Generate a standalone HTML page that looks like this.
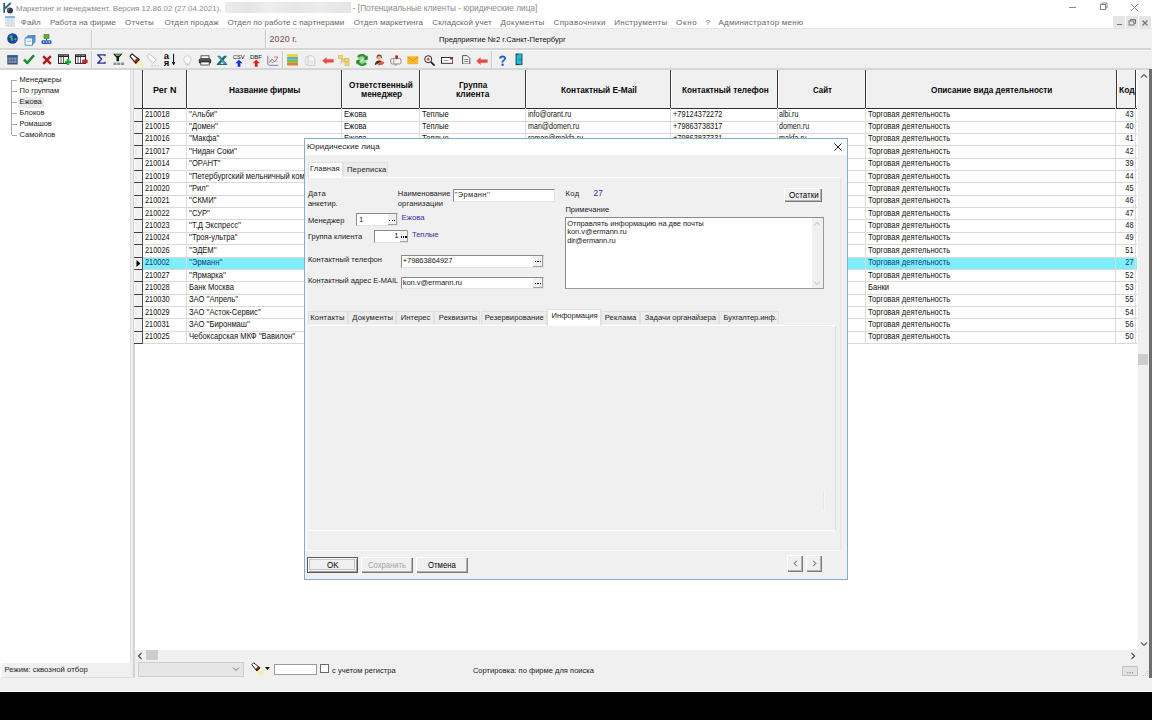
<!DOCTYPE html><html><head><meta charset="utf-8"><style>
*{margin:0;padding:0;box-sizing:border-box}
html,body{width:1152px;height:720px;overflow:hidden;background:#f0f0f0;font-family:"Liberation Sans",sans-serif}
div{position:absolute}
.t{white-space:nowrap;line-height:12px;height:12px}
svg{position:absolute}
</style></head><body>
<div style="left:0px;top:0px;width:1152px;height:28px;background:#fff"></div>
<svg style="left:2px;top:2px" width="12" height="12" viewBox="0 0 12 12"><path d="M2.2 1v9.8" stroke="#1e6272" stroke-width="1.8"></path><path d="M2.8 6.5L8.8 1" stroke="#1e6a7a" stroke-width="1.7"></path><circle cx="8" cy="8.6" r="3" fill="#22405e"></circle><circle cx="6.3" cy="7.6" r="1.4" fill="#c83a4a"></circle></svg>
<div class="t" style="left:16px;top:3.00px;font-size:7.9px;color:#8a8a8a;">Маркетинг и менеджмент. Версия 12.86.02 (27.04.2021).</div>
<div style="left:225px;top:2px;width:126px;height:10.5px;background:linear-gradient(90deg,#ececec,#e4e4e4 20%,#eeeeee 35%,#e6e6e6 55%,#ececec 75%,#e4e4e4)"></div>
<div class="t" style="left:352.8px;top:3.00px;font-size:8.28px;color:#8a8a8a;">- [Потенциальные клиенты - юридические лица]</div>
<div style="left:1069px;top:7px;width:7px;height:1px;background:#8a8a8a"></div>
<svg style="left:1099px;top:2px" width="9" height="9" viewBox="0 0 9 9"><rect x="1.5" y="2.5" width="5" height="5" fill="none" stroke="#888" stroke-width="1"></rect><path d="M3 2.5V1h5v5H6.5" fill="none" stroke="#888"></path></svg>
<svg style="left:1130px;top:2.5px" width="9" height="9" viewBox="0 0 9 9"><path d="M1 1L8 8M8 1L1 8" stroke="#888" stroke-width="1"></path></svg>
<svg style="left:5px;top:16px" width="10" height="11" viewBox="0 0 10 11"><rect x="0" y="0" width="10" height="11" fill="#e6e9ee"></rect><rect x="0" y="0" width="10" height="2.2" fill="#8fb6dc"></rect><path d="M0 4.5h10M0 7h10M0 9.5h10M3.3 2v9M6.6 2v9" stroke="#cfd3da" stroke-width=".6"></path></svg>
<div class="t" style="left: 20.75px; top: 16.9px; font-size: 8px; color: rgb(102, 102, 102); letter-spacing: 0.0927083px;">Файл</div>
<div class="t" style="left: 50px; top: 16.9px; font-size: 8px; color: rgb(102, 102, 102); letter-spacing: 0.0377232px;">Работа на фирме</div>
<div class="t" style="left: 125px; top: 16.9px; font-size: 8px; color: rgb(102, 102, 102); letter-spacing: 0.20875px;">Отчеты</div>
<div class="t" style="left: 164.5px; top: 16.9px; font-size: 8px; color: rgb(102, 102, 102); letter-spacing: 0.119034px;">Отдел продаж</div>
<div class="t" style="left: 227.5px; top: 16.9px; font-size: 8px; color: rgb(102, 102, 102); letter-spacing: 0.0612269px;">Отдел по работе с партнерами</div>
<div class="t" style="left: 353.75px; top: 16.9px; font-size: 8px; color: rgb(102, 102, 102); letter-spacing: 0.127917px;">Отдел маркетинга</div>
<div class="t" style="left: 432.25px; top: 16.9px; font-size: 8px; color: rgb(102, 102, 102); letter-spacing: 0.11875px;">Складской учет</div>
<div class="t" style="left: 500.5px; top: 16.9px; font-size: 8px; color: rgb(102, 102, 102); letter-spacing: 0.30625px;">Документы</div>
<div class="t" style="left: 553.5px; top: 16.9px; font-size: 8px; color: rgb(102, 102, 102); letter-spacing: 0.348125px;">Справочники</div>
<div class="t" style="left: 614.25px; top: 16.9px; font-size: 8px; color: rgb(102, 102, 102); letter-spacing: 0.305938px;">Инструменты</div>
<div class="t" style="left: 676px; top: 16.9px; font-size: 8px; color: rgb(102, 102, 102); letter-spacing: 0.702083px;">Окно</div>
<div class="t" style="left: 705.5px; top: 16.9px; font-size: 8px; color: rgb(102, 102, 102); letter-spacing: -0.253125px;">?</div>
<div class="t" style="left: 718.5px; top: 16.9px; font-size: 8px; color: rgb(102, 102, 102); letter-spacing: 0.243382px;">Администратор меню</div>
<div style="left:1113px;top:16.4px;width:11.8px;height:12px;background:#e6e6e6"></div>
<div style="left:1126.2px;top:16.4px;width:11.8px;height:12px;background:#e6e6e6"></div>
<div style="left:1139px;top:16.4px;width:11.8px;height:12px;background:#e6e6e6"></div>
<div style="left:1116.5px;top:24px;width:5px;height:1.3px;background:#777"></div>
<svg style="left:1128px;top:18px" width="9" height="9" viewBox="0 0 9 9"><rect x="1" y="3" width="5" height="4" fill="none" stroke="#777" stroke-width="1"></rect><path d="M2.5 3V1.5h5v4H6" fill="none" stroke="#777"></path></svg>
<svg style="left:1141px;top:18.5px" width="8" height="8" viewBox="0 0 8 8"><path d="M1.5 1.5L6.5 6.5M6.5 1.5L1.5 6.5" stroke="#777" stroke-width="1.3"></path></svg>
<div style="left:0px;top:27.8px;width:1152px;height:1.2px;background:#e8e8e8"></div>
<div style="left:0px;top:48.2px;width:1151px;height:1.6px;background:#d6d6d6"></div>
<div style="left:0px;top:49.8px;width:1151px;height:0.8px;background:#fafafa"></div>
<div style="left:0px;top:68.4px;width:1151px;height:1.2px;background:#d6d6d6"></div>
<div style="left:91.3px;top:29.5px;width:1px;height:18.5px;background:#c8c8c8"></div>
<div style="left:92.3px;top:29.5px;width:1px;height:18.5px;background:#fbfbfb"></div>
<div style="left:91.3px;top:50.5px;width:1px;height:17.900000000000006px;background:#c8c8c8"></div>
<div style="left:92.3px;top:50.5px;width:1px;height:17.900000000000006px;background:#fbfbfb"></div>
<div style="left:265.2px;top:29.8px;width:1px;height:18.599999999999998px;background:#c8c8c8"></div>
<div style="left:266.2px;top:29.8px;width:1px;height:18.599999999999998px;background:#fbfbfb"></div>
<div style="left:282.3px;top:50.5px;width:1px;height:17.900000000000006px;background:#c8c8c8"></div>
<div style="left:283.3px;top:50.5px;width:1px;height:17.900000000000006px;background:#fbfbfb"></div>
<div style="left:491.4px;top:50.5px;width:1px;height:17.900000000000006px;background:#c8c8c8"></div>
<div style="left:492.4px;top:50.5px;width:1px;height:17.900000000000006px;background:#fbfbfb"></div>
<div class="t" style="left: 269.6px; top: 33px; font-size: 8.8px; color: rgb(125, 72, 72); letter-spacing: 0.134375px;">2020 г.</div>
<div class="t" style="left: 439px; top: 34.2px; font-size: 7.6px; color: rgb(17, 17, 17); letter-spacing: -0.00665323px;">Предприятие №2 г.Санкт-Петербург</div>
<svg style="left:6.5px;top:33px" width="11" height="11" viewBox="0 0 11 11"><circle cx="5.5" cy="5.5" r="5.3" fill="#1b3fae"></circle><path d="M3 2.5c1.5-.5 2.5 0 3 1l-1 1.5 1.5 1-1 2.5-1.5-1.5-.5-2-1.5-.5z" fill="#3fb84a"></path><path d="M7 5.5l1.8-.5.8 1.5-1.2 1.2z" fill="#3fb84a"></path></svg>
<svg style="left:23.5px;top:33.5px" width="12" height="12" viewBox="0 0 12 12"><path d="M1 4L4 1h7.5v7L8.5 11.3H1z" fill="#5a95cf"></path><path d="M1 4h7.5v7.3H1z" fill="#eef4fb" stroke="#4f86c0" stroke-width=".8"></path><path d="M2.5 7.3h4.5" stroke="#8fb0d0" stroke-width=".8"></path><path d="M8.5 4L11.5 1" stroke="#2f6aa8" stroke-width=".7"></path></svg>
<svg style="left:41.3px;top:33.5px" width="11" height="11" viewBox="0 0 11 11"><rect x="3" y="0.5" width="5" height="4" fill="#6aa830" stroke="#3a7a20" stroke-width=".6"></rect><path d="M5.5 4.5v2" stroke="#3060a0"></path><rect x="0.5" y="6.2" width="10" height="3.8" rx="1.2" fill="#2f66b8"></rect><circle cx="2.8" cy="8.1" r=".8" fill="#bcd6f0"></circle><circle cx="5.5" cy="8.1" r=".8" fill="#bcd6f0"></circle><circle cx="8.2" cy="8.1" r=".8" fill="#bcd6f0"></circle></svg>
<svg style="left:6.8px;top:54.5px" width="11" height="10" viewBox="0 0 11 10"><rect x="0.3" y="0.3" width="10.4" height="9.2" fill="#3c5672"></rect><rect x="1.5" y="2.5" width="8" height="5.5" fill="#7f9ab5"></rect><path d="M1.5 5.2h8M4.2 2.5v5.5M6.8 2.5v5.5" stroke="#3c5672" stroke-width=".6"></path><rect x="0.3" y="0.3" width="10.4" height="1.6" fill="#2a5ea8"></rect></svg>
<svg style="left:23px;top:54.3px" width="12" height="10.5" viewBox="0 0 12 10.5"><path d="M1 5.5l3.2 3.5L11 1.2" fill="none" stroke="#178a2a" stroke-width="2.5" stroke-linejoin="round"></path></svg>
<svg style="left:42px;top:55px" width="10" height="10" viewBox="0 0 10 10"><path d="M1.2 1.2L8.8 8.8M8.8 1.2L1.2 8.8" stroke="#b41a1a" stroke-width="2.4"></path></svg>
<svg style="left:57.7px;top:54px" width="14" height="11" viewBox="0 0 14 11"><rect x="0.5" y="0.8" width="10" height="8.6" fill="#fff" stroke="#222" stroke-width="1"></rect><path d="M0.5 2.3h10" stroke="#222" stroke-width="1.4"></path><path d="M3 1v8.5M5.5 1v8.5" stroke="#333" stroke-width=".8"></path><path d="M10 5v6M7 8h6" stroke="#18b030" stroke-width="2.4"></path></svg>
<svg style="left:75px;top:54px" width="13" height="11" viewBox="0 0 13 11"><rect x="0.5" y="0.8" width="10" height="8.6" fill="#fff" stroke="#222" stroke-width="1"></rect><path d="M0.5 2.3h10" stroke="#222" stroke-width="1.4"></path><path d="M3 1v8.5M5.5 1v8.5" stroke="#333" stroke-width=".8"></path><rect x="7.2" y="5.5" width="5.5" height="3.8" rx="1" fill="#d02020"></rect></svg>
<svg style="left:97px;top:54.3px" width="9" height="10" viewBox="0 0 9 10"><path d="M8 2.2V.8H.8l3.8 4.2L.8 9.2H8V7.8" fill="none" stroke="#2a2a90" stroke-width="1.3"></path></svg>
<svg style="left:112px;top:53.2px" width="14" height="13" viewBox="0 0 14 13"><path d="M1 .8h9.5L7 4.8v3.5H4.5V4.8z" fill="#1a1a1a"></path><path d="M2.5 1.2h6.5L7 3H4.5z" fill="#5bbf50"></path><rect x="1.5" y="9.5" width="3" height="2.5" fill="#7a9a8a"></rect><rect x="5.3" y="9.5" width="3" height="2.5" fill="#7a9a8a"></rect><rect x="9.1" y="9.5" width="3" height="2.5" fill="#7a9a8a"></rect></svg>
<svg style="left:128.8px;top:52.8px" width="14" height="14" viewBox="0 0 14 14"><circle cx="10.2" cy="10.6" r="3.4" fill="#f5f0b0"></circle><path d="M3.06 .94L10.27 6.73 6.73 10.27 .94 3.06z" fill="#fff" stroke="#1a1a1a" stroke-width="1.1" stroke-linejoin="round"></path><path d="M8.4 5.2L10.27 6.73 6.73 10.27 5.2 8.4z" fill="#c42020" stroke="#1a1a1a" stroke-width=".8"></path></svg>
<svg style="left:145.8px;top:52.8px" width="14" height="14" viewBox="0 0 14 14"><path d="M3.06 .94L10.27 6.73 6.73 10.27 .94 3.06z" fill="#fcfcfc" stroke="#c4c4c4" stroke-width="1" stroke-linejoin="round"></path><path d="M5.5 12.8h1.2M8.5 12.8h1.2M11.5 12.8h1.2" stroke="#a8a8a8" stroke-width="1"></path></svg>
<svg style="left:164px;top:53px" width="12" height="14" viewBox="0 0 12 14"><text x="-0.3" y="6.3" font-family="Liberation Sans" font-weight="bold" font-size="9.5" fill="#0a0a0a">a</text><text x="-0.3" y="13.2" font-family="Liberation Sans" font-weight="bold" font-size="9.5" fill="#0a0a0a">я</text><path d="M9.6 .8v9.5" stroke="#0a0a0a" stroke-width="1"></path><path d="M7.8 9h3.6l-1.8 3.6z" fill="#0a0a0a"></path></svg>
<svg style="left:182.8px;top:54.5px" width="9" height="11" viewBox="0 0 9 11"><path d="M4.5 .8a3.6 3.6 0 0 1 2.2 6.5v1.5H2.3V7.3A3.6 3.6 0 0 1 4.5 .8z" fill="#fbfbfb" stroke="#c6c6c6" stroke-width=".9"></path><path d="M2.8 9.8h3.4" stroke="#c6c6c6"></path></svg>
<svg style="left:197.7px;top:54.5px" width="14" height="11" viewBox="0 0 14 11"><rect x="3" y=".8" width="8" height="3" fill="#fff" stroke="#333" stroke-width=".8"></rect><rect x=".8" y="3.5" width="12.4" height="5" rx="1.5" fill="#3a3a3a"></rect><rect x="2.8" y="7" width="8.4" height="3" fill="#fff" stroke="#333" stroke-width=".8"></rect><path d="M2 5h10" stroke="#888" stroke-width=".6"></path></svg>
<svg style="left:215.6px;top:55.2px" width="12" height="10" viewBox="0 0 12 10"><path d="M.8 .8h3.2l7.2 8.4H8z" fill="#2b7f8f"></path><path d="M11.2 .8H8L.8 9.2H4z" fill="#1f6a78"></path><path d="M2 1.5l6.8 7" stroke="#9fe0ec" stroke-width=".7"></path><path d="M.8 9.4h10.4" stroke="#175a66" stroke-width="1"></path></svg>
<svg style="left:232.6px;top:53.6px" width="12" height="13.5" viewBox="0 0 12 13.5"><text x="0" y="5" font-family="Liberation Sans" font-size="5.6" fill="#111" textLength="11.6" lengthAdjust="spacingAndGlyphs">CSV</text><path d="M6 5.8l3.6 3.4H7.4v3.6H4.6V9.2H2.4z" fill="#1530e0"></path></svg>
<svg style="left:249.5px;top:53.6px" width="13" height="13.5" viewBox="0 0 13 13.5"><text x="0" y="5" font-family="Liberation Sans" font-size="5.6" fill="#111" textLength="12" lengthAdjust="spacingAndGlyphs">DBF</text><path d="M6.2 5.8l3.6 3.4H7.6v3.6H4.8V9.2H2.6z" fill="#e81818"></path></svg>
<svg style="left:267px;top:55px" width="12" height="11" viewBox="0 0 12 11"><path d="M.8 .8v8.5a2 1.5 0 0 0 2 1h8.5" fill="none" stroke="#6a7a9a" stroke-width=".9"></path><path d="M2 8l3-4 2.5 3 3.5-5" fill="none" stroke="#d86060" stroke-width=".9"></path><path d="M2.5 4.5l3 3.5 3-3 2 2" fill="none" stroke="#60a0c0" stroke-width=".8"></path><path d="M7 2h4" stroke="#d86060" stroke-width=".8"></path></svg>
<svg style="left:287.2px;top:54.2px" width="11.2" height="11.6" viewBox="0 0 11.2 11.6"><rect x="0" y="0" width="11.2" height="2.9" rx=".8" fill="#f2d23a"></rect><rect x="0" y="2.9" width="11.2" height="2.9" rx=".8" fill="#4fb0dc"></rect><rect x="0" y="5.8" width="11.2" height="2.9" rx=".8" fill="#86c03c"></rect><rect x="0" y="8.7" width="11.2" height="2.9" rx=".8" fill="#ec7a34"></rect></svg>
<svg style="left:305px;top:55px" width="10.5" height="11" viewBox="0 0 10.5 11"><path d="M.8 1.8h5v8H.8z" fill="#fafafa" stroke="#c8c8c8" stroke-width=".8"></path><path d="M3 .8h4.3l2.5 2.5v7H3z" fill="#f6f6f6" stroke="#c0c0c0" stroke-width=".8"></path><path d="M4.5 6h3.5M4.5 7.8h3.5" stroke="#cfcfcf" stroke-width=".7"></path></svg>
<svg style="left:321.5px;top:56.5px" width="12" height="7.5" viewBox="0 0 12 7.5"><path d="M.3 3.7L4.6 .2v2h7v3.2h-7v2z" fill="#e94a3a"></path><path d="M4.6 2.2h7" stroke="#f59080" stroke-width=".6"></path></svg>
<svg style="left:338.3px;top:54.6px" width="12" height="11.5" viewBox="0 0 12 11.5"><rect x=".5" y=".5" width="4" height="3" fill="#f0da70" stroke="#c8a838" stroke-width=".5"></rect><rect x="3.5" y="4" width="4" height="3" fill="#f0da70" stroke="#c8a838" stroke-width=".5"></rect><rect x="7" y="3.5" width="4" height="3" fill="#f0da70" stroke="#c8a838" stroke-width=".5"></rect><rect x="7" y="7.8" width="4" height="3" fill="#f0da70" stroke="#c8a838" stroke-width=".5"></rect><rect x="2" y="6.5" width="2.5" height="2.5" fill="#ddd"></rect></svg>
<svg style="left:355.5px;top:54.4px" width="12" height="12" viewBox="0 0 12 12"><circle cx="6" cy="6" r="4.4" fill="#9ad890"></circle><path d="M10.2 4.2A4.6 4.6 0 0 0 2 3.2" fill="none" stroke="#2c9a30" stroke-width="2.4"></path><path d="M1.8 7.8A4.6 4.6 0 0 0 10 8.8" fill="none" stroke="#2c9a30" stroke-width="2.4"></path><path d="M11.6 1.6v4.2H7.6z" fill="#1f7a22"></path><path d="M.4 10.4V6.2h4z" fill="#1f7a22"></path><path d="M4.3 6.8l3-2.2.6 1.4-3 2z" fill="#d8f4d0"></path></svg>
<svg style="left:373.5px;top:54.2px" width="11" height="12" viewBox="0 0 11 12"><path d="M2.6 3.6c0-2 1-3.1 2.6-3.1s2.6 1 2.6 3l-.6 1.2H3.2z" fill="#7a3a18"></path><ellipse cx="5.2" cy="4" rx="1.9" ry="2.1" fill="#f0b890"></ellipse><path d="M.8 11.2c0-3 1.6-4.8 4.2-4.8 1.4 0 2.2.4 2.8 1z" fill="#4a3030"></path><path d="M3.5 11.2c.5-1.8 2-3.4 4.2-3.6 1.2-.1 2.2.3 2.8.9-.6 1.6-2.6 2.7-5 2.7z" fill="#e55840"></path></svg>
<svg style="left:389.8px;top:54.6px" width="12" height="11" viewBox="0 0 12 11"><rect x=".8" y="3.4" width="10.2" height="5.6" rx="1.6" fill="#f2f2f2" stroke="#8a8a8a" stroke-width="1"></rect><path d="M3.8 3.6v5.2" stroke="#8a8a8a" stroke-width=".8"></path><rect x="5.3" y=".4" width="2.6" height="3" fill="#b82020"></rect><path d="M6.6 3.2v1.2" stroke="#b82020"></path><path d="M5.8 9v2" stroke="#8a8a8a" stroke-width="1"></path></svg>
<svg style="left:407px;top:56px" width="11.5" height="8.5" viewBox="0 0 11.5 8.5"><rect x=".3" y=".3" width="11" height="8" rx=".8" fill="#f6b82a"></rect><path d="M.6 .8l5.1 4 5.1-4" fill="none" stroke="#d08a10" stroke-width=".9"></path></svg>
<svg style="left:424px;top:54.8px" width="11.5" height="11" viewBox="0 0 11.5 11"><circle cx="4.2" cy="4.2" r="3.5" fill="#fff" stroke="#222" stroke-width="1"></circle><path d="M2.6 4.2h3.2M4.2 2.6v3.2" stroke="#d02020" stroke-width="1"></path><path d="M6.8 6.8l3.8 3.8" stroke="#222" stroke-width="1.8"></path></svg>
<svg style="left:441px;top:57.2px" width="12.3" height="6.8" viewBox="0 0 12.3 6.8"><rect x=".5" y=".5" width="11.3" height="5.8" fill="#fff" stroke="#333" stroke-width="1"></rect><path d="M2.5 3.6h5" stroke="#777" stroke-width=".8"></path><rect x="9" y=".5" width="2.6" height="2" fill="#c02020"></rect></svg>
<svg style="left:462.3px;top:54.8px" width="8.5" height="9.5" viewBox="0 0 8.5 9.5"><path d="M.6 .6h4.5l2.7 2.7v5.8H.6z" fill="#f4f4f4" stroke="#444" stroke-width=".9"></path><path d="M2.3 4.5h3.8M2.3 6.5h3.8" stroke="#555" stroke-width=".7"></path></svg>
<svg style="left:475.6px;top:56.5px" width="12" height="8" viewBox="0 0 12 8"><path d="M.3 4L4.6 .3v2.2h7v3.2h-7v2.2z" fill="#ec4a3a"></path><path d="M4.6 2.5h7" stroke="#f59080" stroke-width=".6"></path></svg>
<svg style="left:497.5px;top:54.6px" width="9" height="11.2" viewBox="0 0 9 11.2"><path d="M1.2 3.4c0-1.8 1.4-2.8 3.4-2.8s3.4 1.2 3.4 2.7c0 2-2.6 2.3-2.6 4.3H3.5c0-2.6 2.5-2.8 2.5-4.2 0-.6-.5-1-1.4-1s-1.4.5-1.4 1z" fill="#1a62c8"></path><circle cx="4.6" cy="9.8" r="1.2" fill="#1a62c8"></circle></svg>
<svg style="left:514.5px;top:53px" width="8.5" height="13" viewBox="0 0 8.5 13"><path d="M.6 .6h6.8v11.5H.6z" fill="#1a3a4a"></path><path d="M1.5 2l5-1.2v11l-5-1z" fill="#22b8d8"></path><circle cx="5" cy="6.5" r=".5" fill="#0a3a4a"></circle></svg>
<div style="left:0px;top:69.6px;width:131px;height:608px;background:#fff;border-right:1px solid #e0e0e0"></div>
<div style="left:11px;top:79.5px;width:1px;height:55.5px;background:#a8a8a8"></div>
<div style="left:18px;top:96.5px;width:25.5px;height:11px;background:#ececec"></div>
<div style="left:11.5px;top:79.7px;width:5px;height:1px;background:#a8a8a8"></div>
<div class="t" style="left:19.5px;top:73.70px;font-size:7.5px;color:#1a1a1a">Менеджеры</div>
<div style="left:11.5px;top:90.8px;width:5px;height:1px;background:#a8a8a8"></div>
<div class="t" style="left:19.5px;top:84.80px;font-size:7.5px;color:#1a1a1a">По группам</div>
<div style="left:11.5px;top:101.9px;width:5px;height:1px;background:#a8a8a8"></div>
<div class="t" style="left:19.5px;top:95.90px;font-size:7.5px;color:#1a1a1a">Ежова</div>
<div style="left:11.5px;top:113px;width:5px;height:1px;background:#a8a8a8"></div>
<div class="t" style="left:19.5px;top:107.00px;font-size:7.5px;color:#1a1a1a">Блоков</div>
<div style="left:11.5px;top:123.5px;width:5px;height:1px;background:#a8a8a8"></div>
<div class="t" style="left:19.5px;top:117.50px;font-size:7.5px;color:#1a1a1a">Ромашов</div>
<div style="left:11.5px;top:134.6px;width:5px;height:1px;background:#a8a8a8"></div>
<div class="t" style="left:19.5px;top:128.60px;font-size:7.5px;color:#1a1a1a">Самойлов</div>
<div style="left:1px;top:663px;width:129.5px;height:14.5px;background:#f0f0f0;border-bottom:1px solid #dedede;border-left:1px solid #f8f8f8"></div>
<div class="t" style="left: 4.4px; top: 664px; font-size: 7.7px; color: rgb(26, 26, 26); letter-spacing: 0.0539063px;">Режим: сквозной отбор</div>
<div style="left:130.5px;top:69.6px;width:2.5px;height:608px;background:#ececec"></div>
<div style="left:132.8px;top:69.6px;width:2.5px;height:608px;background:#d4d4d4"></div>
<div style="left:135.3px;top:69.6px;width:1002.70px;height:580.4px;background:#fff"></div>
<div style="left:133.6px;top:69.6px;width:1001.9999999999999px;height:38.7px;background:#f0f0f0"></div>
<div style="left:141.90px;top:69.6px;width:1.1px;height:38.7px;background:#3a3a3a"></div>
<div style="left:143.10px;top:69.6px;width:1px;height:38.7px;background:#fff"></div>
<div style="left:186.00px;top:69.6px;width:1.1px;height:38.7px;background:#3a3a3a"></div>
<div style="left:187.20px;top:69.6px;width:1px;height:38.7px;background:#fff"></div>
<div style="left:341.10px;top:69.6px;width:1.1px;height:38.7px;background:#3a3a3a"></div>
<div style="left:342.30px;top:69.6px;width:1px;height:38.7px;background:#fff"></div>
<div style="left:419.00px;top:69.6px;width:1.1px;height:38.7px;background:#3a3a3a"></div>
<div style="left:420.20px;top:69.6px;width:1px;height:38.7px;background:#fff"></div>
<div style="left:525.20px;top:69.6px;width:1.1px;height:38.7px;background:#3a3a3a"></div>
<div style="left:526.40px;top:69.6px;width:1px;height:38.7px;background:#fff"></div>
<div style="left:670.20px;top:69.6px;width:1.1px;height:38.7px;background:#3a3a3a"></div>
<div style="left:671.40px;top:69.6px;width:1px;height:38.7px;background:#fff"></div>
<div style="left:776.60px;top:69.6px;width:1.1px;height:38.7px;background:#3a3a3a"></div>
<div style="left:777.80px;top:69.6px;width:1px;height:38.7px;background:#fff"></div>
<div style="left:865.00px;top:69.6px;width:1.1px;height:38.7px;background:#3a3a3a"></div>
<div style="left:866.20px;top:69.6px;width:1px;height:38.7px;background:#fff"></div>
<div style="left:1115.50px;top:69.6px;width:1.1px;height:38.7px;background:#3a3a3a"></div>
<div style="left:1116.70px;top:69.6px;width:1px;height:38.7px;background:#fff"></div>
<div style="left:1135.20px;top:69.6px;width:1.1px;height:38.7px;background:#3a3a3a"></div>
<div style="left:1136.40px;top:69.6px;width:1px;height:38.7px;background:#fff"></div>
<div style="left:133.6px;top:107.50px;width:1003.50px;height:1.1px;background:#2e2e2e"></div>
<div class="t" style="left: 153.3px; top: 83.6px; font-size: 8.8px; font-weight: bold; color: rgb(10, 10, 10); transform-origin: 0px 50%; transform: scaleX(1.0167);">Рег N</div>
<div class="t" style="left: 229.4px; top: 83.6px; font-size: 8.8px; font-weight: bold; color: rgb(10, 10, 10); transform-origin: 0px 50%; transform: scaleX(0.9351);">Название фирмы</div>
<div class="t" style="left: 349.4px; top: 79.3px; font-size: 8.8px; font-weight: bold; color: rgb(10, 10, 10); transform-origin: 0px 50%; transform: scaleX(0.9321);">Ответственный</div>
<div class="t" style="left: 360.8px; top: 88.2px; font-size: 8.8px; font-weight: bold; color: rgb(10, 10, 10); transform-origin: 0px 50%; transform: scaleX(0.9454);">менеджер</div>
<div class="t" style="left: 459.2px; top: 79.3px; font-size: 8.8px; font-weight: bold; color: rgb(10, 10, 10); transform-origin: 0px 50%; transform: scaleX(0.9298);">Группа</div>
<div class="t" style="left: 456.4px; top: 88.2px; font-size: 8.8px; font-weight: bold; color: rgb(10, 10, 10); transform-origin: 0px 50%; transform: scaleX(0.9564);">клиента</div>
<div class="t" style="left: 560.9px; top: 83.6px; font-size: 8.8px; font-weight: bold; color: rgb(10, 10, 10); transform-origin: 0px 50%; transform: scaleX(0.9421);">Контактный E-Mail</div>
<div class="t" style="left: 681.7px; top: 83.6px; font-size: 8.8px; font-weight: bold; color: rgb(10, 10, 10); transform-origin: 0px 50%; transform: scaleX(0.9375);">Контактный телефон</div>
<div class="t" style="left: 812.5px; top: 83.6px; font-size: 8.8px; font-weight: bold; color: rgb(10, 10, 10); transform-origin: 0px 50%; transform: scaleX(0.9014);">Сайт</div>
<div class="t" style="left: 931px; top: 83.6px; font-size: 8.8px; font-weight: bold; color: rgb(10, 10, 10); transform-origin: 0px 50%; transform: scaleX(0.9321);">Описание вида деятельности</div>
<div class="t" style="left: 1118.9px; top: 83.6px; font-size: 8.8px; font-weight: bold; color: rgb(10, 10, 10); transform-origin: 0px 50%; transform: scaleX(0.968);">Код</div>
<div style="left:142.3px;top:120.50px;width:994.30px;height:1px;background:#d9d9d9"></div>
<div style="left:133.6px;top:108.70px;width:8.70px;height:12.80px;background:#f0f0f0;border-left:1px solid #fff"></div>
<div style="left:133.6px;top:120.50px;width:8.70px;height:1px;background:#404040"></div>
<div class="t" style="left:144.50px;width:45.67px;overflow:hidden;top:108.70px;font-size:8.2px;color:#111;transform:scaleX(0.9);transform-origin:0 50%">210018</div>
<div class="t" style="left:188.60px;width:163.55px;overflow:hidden;top:108.70px;font-size:8.2px;color:#111;transform:scaleX(0.93);transform-origin:0 50%">''Альби''</div>
<div class="t" style="left:343.70px;width:80.54px;overflow:hidden;top:108.70px;font-size:8.2px;color:#111;transform:scaleX(0.93);transform-origin:0 50%">Ежова</div>
<div class="t" style="left:421.60px;width:110.97px;overflow:hidden;top:108.70px;font-size:8.2px;color:#111;transform:scaleX(0.93);transform-origin:0 50%">Теплые</div>
<div class="t" style="left:527.80px;width:163.22px;overflow:hidden;top:108.70px;font-size:8.2px;color:#111;transform:scaleX(0.87);transform-origin:0 50%">info@orant.ru</div>
<div class="t" style="left:672.80px;width:114.89px;overflow:hidden;top:108.70px;font-size:8.2px;color:#111;transform:scaleX(0.9);transform-origin:0 50%">+79124372272</div>
<div class="t" style="left:779.20px;width:98.16px;overflow:hidden;top:108.70px;font-size:8.2px;color:#111;transform:scaleX(0.87);transform-origin:0 50%">albi.ru</div>
<div class="t" style="left:867.60px;width:266.13px;overflow:hidden;top:108.70px;font-size:8.2px;color:#111;transform:scaleX(0.93);transform-origin:0 50%">Торговая деятельность</div>
<div class="t" style="left:1115.9px;width:17.50px;text-align:right;top:108.70px;font-size:8.2px;color:#111;transform:scaleX(.9);transform-origin:100% 50%">43</div>
<div style="left:142.3px;top:132.87px;width:994.30px;height:1px;background:#d9d9d9"></div>
<div style="left:133.6px;top:121.50px;width:8.70px;height:12.37px;background:#f0f0f0;border-left:1px solid #fff"></div>
<div style="left:133.6px;top:132.87px;width:8.70px;height:1px;background:#404040"></div>
<div class="t" style="left:144.50px;width:45.67px;overflow:hidden;top:121.07px;font-size:8.2px;color:#111;transform:scaleX(0.9);transform-origin:0 50%">210015</div>
<div class="t" style="left:188.60px;width:163.55px;overflow:hidden;top:121.07px;font-size:8.2px;color:#111;transform:scaleX(0.93);transform-origin:0 50%">''Домен''</div>
<div class="t" style="left:343.70px;width:80.54px;overflow:hidden;top:121.07px;font-size:8.2px;color:#111;transform:scaleX(0.93);transform-origin:0 50%">Ежова</div>
<div class="t" style="left:421.60px;width:110.97px;overflow:hidden;top:121.07px;font-size:8.2px;color:#111;transform:scaleX(0.93);transform-origin:0 50%">Теплые</div>
<div class="t" style="left:527.80px;width:163.22px;overflow:hidden;top:121.07px;font-size:8.2px;color:#111;transform:scaleX(0.87);transform-origin:0 50%">man@domen.ru</div>
<div class="t" style="left:672.80px;width:114.89px;overflow:hidden;top:121.07px;font-size:8.2px;color:#111;transform:scaleX(0.9);transform-origin:0 50%">+79863738317</div>
<div class="t" style="left:779.20px;width:98.16px;overflow:hidden;top:121.07px;font-size:8.2px;color:#111;transform:scaleX(0.87);transform-origin:0 50%">domen.ru</div>
<div class="t" style="left:867.60px;width:266.13px;overflow:hidden;top:121.07px;font-size:8.2px;color:#111;transform:scaleX(0.93);transform-origin:0 50%">Торговая деятельность</div>
<div class="t" style="left:1115.9px;width:17.50px;text-align:right;top:121.07px;font-size:8.2px;color:#111;transform:scaleX(.9);transform-origin:100% 50%">40</div>
<div style="left:142.3px;top:145.24px;width:994.30px;height:1px;background:#d9d9d9"></div>
<div style="left:133.6px;top:133.87px;width:8.70px;height:12.37px;background:#f0f0f0;border-left:1px solid #fff"></div>
<div style="left:133.6px;top:145.24px;width:8.70px;height:1px;background:#404040"></div>
<div class="t" style="left:144.50px;width:45.67px;overflow:hidden;top:133.44px;font-size:8.2px;color:#111;transform:scaleX(0.9);transform-origin:0 50%">210016</div>
<div class="t" style="left:188.60px;width:163.55px;overflow:hidden;top:133.44px;font-size:8.2px;color:#111;transform:scaleX(0.93);transform-origin:0 50%">''Макфа''</div>
<div class="t" style="left:343.70px;width:80.54px;overflow:hidden;top:133.44px;font-size:8.2px;color:#111;transform:scaleX(0.93);transform-origin:0 50%">Ежова</div>
<div class="t" style="left:421.60px;width:110.97px;overflow:hidden;top:133.44px;font-size:8.2px;color:#111;transform:scaleX(0.93);transform-origin:0 50%">Теплые</div>
<div class="t" style="left:527.80px;width:163.22px;overflow:hidden;top:133.44px;font-size:8.2px;color:#111;transform:scaleX(0.87);transform-origin:0 50%">roman@makfa.ru</div>
<div class="t" style="left:672.80px;width:114.89px;overflow:hidden;top:133.44px;font-size:8.2px;color:#111;transform:scaleX(0.9);transform-origin:0 50%">+79863837331</div>
<div class="t" style="left:779.20px;width:98.16px;overflow:hidden;top:133.44px;font-size:8.2px;color:#111;transform:scaleX(0.87);transform-origin:0 50%">makfa.ru</div>
<div class="t" style="left:867.60px;width:266.13px;overflow:hidden;top:133.44px;font-size:8.2px;color:#111;transform:scaleX(0.93);transform-origin:0 50%">Торговая деятельность</div>
<div class="t" style="left:1115.9px;width:17.50px;text-align:right;top:133.44px;font-size:8.2px;color:#111;transform:scaleX(.9);transform-origin:100% 50%">41</div>
<div style="left:142.3px;top:157.61px;width:994.30px;height:1px;background:#d9d9d9"></div>
<div style="left:133.6px;top:146.24px;width:8.70px;height:12.37px;background:#f0f0f0;border-left:1px solid #fff"></div>
<div style="left:133.6px;top:157.61px;width:8.70px;height:1px;background:#404040"></div>
<div class="t" style="left:144.50px;width:45.67px;overflow:hidden;top:145.81px;font-size:8.2px;color:#111;transform:scaleX(0.9);transform-origin:0 50%">210017</div>
<div class="t" style="left:188.60px;width:163.55px;overflow:hidden;top:145.81px;font-size:8.2px;color:#111;transform:scaleX(0.93);transform-origin:0 50%">''Нидан Соки''</div>
<div class="t" style="left:867.60px;width:266.13px;overflow:hidden;top:145.81px;font-size:8.2px;color:#111;transform:scaleX(0.93);transform-origin:0 50%">Торговая деятельность</div>
<div class="t" style="left:1115.9px;width:17.50px;text-align:right;top:145.81px;font-size:8.2px;color:#111;transform:scaleX(.9);transform-origin:100% 50%">42</div>
<div style="left:142.3px;top:169.98px;width:994.30px;height:1px;background:#d9d9d9"></div>
<div style="left:133.6px;top:158.61px;width:8.70px;height:12.37px;background:#f0f0f0;border-left:1px solid #fff"></div>
<div style="left:133.6px;top:169.98px;width:8.70px;height:1px;background:#404040"></div>
<div class="t" style="left:144.50px;width:45.67px;overflow:hidden;top:158.18px;font-size:8.2px;color:#111;transform:scaleX(0.9);transform-origin:0 50%">210014</div>
<div class="t" style="left:188.60px;width:163.55px;overflow:hidden;top:158.18px;font-size:8.2px;color:#111;transform:scaleX(0.93);transform-origin:0 50%">''ОРАНТ''</div>
<div class="t" style="left:867.60px;width:266.13px;overflow:hidden;top:158.18px;font-size:8.2px;color:#111;transform:scaleX(0.93);transform-origin:0 50%">Торговая деятельность</div>
<div class="t" style="left:1115.9px;width:17.50px;text-align:right;top:158.18px;font-size:8.2px;color:#111;transform:scaleX(.9);transform-origin:100% 50%">39</div>
<div style="left:142.3px;top:182.35px;width:994.30px;height:1px;background:#d9d9d9"></div>
<div style="left:133.6px;top:170.98px;width:8.70px;height:12.37px;background:#f0f0f0;border-left:1px solid #fff"></div>
<div style="left:133.6px;top:182.35px;width:8.70px;height:1px;background:#404040"></div>
<div class="t" style="left:144.50px;width:45.67px;overflow:hidden;top:170.55px;font-size:8.2px;color:#111;transform:scaleX(0.9);transform-origin:0 50%">210019</div>
<div class="t" style="left:188.60px;width:163.55px;overflow:hidden;top:170.55px;font-size:8.2px;color:#111;transform:scaleX(0.93);transform-origin:0 50%">''Петербургский мельничный комбинат''</div>
<div class="t" style="left:867.60px;width:266.13px;overflow:hidden;top:170.55px;font-size:8.2px;color:#111;transform:scaleX(0.93);transform-origin:0 50%">Торговая деятельность</div>
<div class="t" style="left:1115.9px;width:17.50px;text-align:right;top:170.55px;font-size:8.2px;color:#111;transform:scaleX(.9);transform-origin:100% 50%">44</div>
<div style="left:142.3px;top:194.72px;width:994.30px;height:1px;background:#d9d9d9"></div>
<div style="left:133.6px;top:183.35px;width:8.70px;height:12.37px;background:#f0f0f0;border-left:1px solid #fff"></div>
<div style="left:133.6px;top:194.72px;width:8.70px;height:1px;background:#404040"></div>
<div class="t" style="left:144.50px;width:45.67px;overflow:hidden;top:182.92px;font-size:8.2px;color:#111;transform:scaleX(0.9);transform-origin:0 50%">210020</div>
<div class="t" style="left:188.60px;width:163.55px;overflow:hidden;top:182.92px;font-size:8.2px;color:#111;transform:scaleX(0.93);transform-origin:0 50%">''Рил''</div>
<div class="t" style="left:867.60px;width:266.13px;overflow:hidden;top:182.92px;font-size:8.2px;color:#111;transform:scaleX(0.93);transform-origin:0 50%">Торговая деятельность</div>
<div class="t" style="left:1115.9px;width:17.50px;text-align:right;top:182.92px;font-size:8.2px;color:#111;transform:scaleX(.9);transform-origin:100% 50%">45</div>
<div style="left:142.3px;top:207.09px;width:994.30px;height:1px;background:#d9d9d9"></div>
<div style="left:133.6px;top:195.72px;width:8.70px;height:12.37px;background:#f0f0f0;border-left:1px solid #fff"></div>
<div style="left:133.6px;top:207.09px;width:8.70px;height:1px;background:#404040"></div>
<div class="t" style="left:144.50px;width:45.67px;overflow:hidden;top:195.29px;font-size:8.2px;color:#111;transform:scaleX(0.9);transform-origin:0 50%">210021</div>
<div class="t" style="left:188.60px;width:163.55px;overflow:hidden;top:195.29px;font-size:8.2px;color:#111;transform:scaleX(0.93);transform-origin:0 50%">''СКМИ''</div>
<div class="t" style="left:867.60px;width:266.13px;overflow:hidden;top:195.29px;font-size:8.2px;color:#111;transform:scaleX(0.93);transform-origin:0 50%">Торговая деятельность</div>
<div class="t" style="left:1115.9px;width:17.50px;text-align:right;top:195.29px;font-size:8.2px;color:#111;transform:scaleX(.9);transform-origin:100% 50%">46</div>
<div style="left:142.3px;top:219.46px;width:994.30px;height:1px;background:#d9d9d9"></div>
<div style="left:133.6px;top:208.09px;width:8.70px;height:12.37px;background:#f0f0f0;border-left:1px solid #fff"></div>
<div style="left:133.6px;top:219.46px;width:8.70px;height:1px;background:#404040"></div>
<div class="t" style="left:144.50px;width:45.67px;overflow:hidden;top:207.66px;font-size:8.2px;color:#111;transform:scaleX(0.9);transform-origin:0 50%">210022</div>
<div class="t" style="left:188.60px;width:163.55px;overflow:hidden;top:207.66px;font-size:8.2px;color:#111;transform:scaleX(0.93);transform-origin:0 50%">''СУР''</div>
<div class="t" style="left:867.60px;width:266.13px;overflow:hidden;top:207.66px;font-size:8.2px;color:#111;transform:scaleX(0.93);transform-origin:0 50%">Торговая деятельность</div>
<div class="t" style="left:1115.9px;width:17.50px;text-align:right;top:207.66px;font-size:8.2px;color:#111;transform:scaleX(.9);transform-origin:100% 50%">47</div>
<div style="left:142.3px;top:231.83px;width:994.30px;height:1px;background:#d9d9d9"></div>
<div style="left:133.6px;top:220.46px;width:8.70px;height:12.37px;background:#f0f0f0;border-left:1px solid #fff"></div>
<div style="left:133.6px;top:231.83px;width:8.70px;height:1px;background:#404040"></div>
<div class="t" style="left:144.50px;width:45.67px;overflow:hidden;top:220.03px;font-size:8.2px;color:#111;transform:scaleX(0.9);transform-origin:0 50%">210023</div>
<div class="t" style="left:188.60px;width:163.55px;overflow:hidden;top:220.03px;font-size:8.2px;color:#111;transform:scaleX(0.93);transform-origin:0 50%">''Т.Д Экспресс''</div>
<div class="t" style="left:867.60px;width:266.13px;overflow:hidden;top:220.03px;font-size:8.2px;color:#111;transform:scaleX(0.93);transform-origin:0 50%">Торговая деятельность</div>
<div class="t" style="left:1115.9px;width:17.50px;text-align:right;top:220.03px;font-size:8.2px;color:#111;transform:scaleX(.9);transform-origin:100% 50%">48</div>
<div style="left:142.3px;top:244.20px;width:994.30px;height:1px;background:#d9d9d9"></div>
<div style="left:133.6px;top:232.83px;width:8.70px;height:12.37px;background:#f0f0f0;border-left:1px solid #fff"></div>
<div style="left:133.6px;top:244.20px;width:8.70px;height:1px;background:#404040"></div>
<div class="t" style="left:144.50px;width:45.67px;overflow:hidden;top:232.40px;font-size:8.2px;color:#111;transform:scaleX(0.9);transform-origin:0 50%">210024</div>
<div class="t" style="left:188.60px;width:163.55px;overflow:hidden;top:232.40px;font-size:8.2px;color:#111;transform:scaleX(0.93);transform-origin:0 50%">''Троя-ультра''</div>
<div class="t" style="left:867.60px;width:266.13px;overflow:hidden;top:232.40px;font-size:8.2px;color:#111;transform:scaleX(0.93);transform-origin:0 50%">Торговая деятельность</div>
<div class="t" style="left:1115.9px;width:17.50px;text-align:right;top:232.40px;font-size:8.2px;color:#111;transform:scaleX(.9);transform-origin:100% 50%">49</div>
<div style="left:142.3px;top:256.57px;width:994.30px;height:1px;background:#d9d9d9"></div>
<div style="left:133.6px;top:245.20px;width:8.70px;height:12.37px;background:#f0f0f0;border-left:1px solid #fff"></div>
<div style="left:133.6px;top:256.57px;width:8.70px;height:1px;background:#404040"></div>
<div class="t" style="left:144.50px;width:45.67px;overflow:hidden;top:244.77px;font-size:8.2px;color:#111;transform:scaleX(0.9);transform-origin:0 50%">210026</div>
<div class="t" style="left:188.60px;width:163.55px;overflow:hidden;top:244.77px;font-size:8.2px;color:#111;transform:scaleX(0.93);transform-origin:0 50%">''ЭДЕМ''</div>
<div class="t" style="left:867.60px;width:266.13px;overflow:hidden;top:244.77px;font-size:8.2px;color:#111;transform:scaleX(0.93);transform-origin:0 50%">Торговая деятельность</div>
<div class="t" style="left:1115.9px;width:17.50px;text-align:right;top:244.77px;font-size:8.2px;color:#111;transform:scaleX(.9);transform-origin:100% 50%">51</div>
<div style="left:142.3px;top:257.57px;width:994.90px;height:11.87px;background:#7eeefb"></div>
<div style="left:142.3px;top:268.94px;width:994.30px;height:1px;background:#d9d9d9"></div>
<div style="left:133.6px;top:257.57px;width:8.70px;height:12.37px;background:#f0f0f0;border-left:1px solid #fff"></div>
<div style="left:133.6px;top:268.94px;width:8.70px;height:1px;background:#404040"></div>
<svg style="left:135.5px;top:259.84px" width="5" height="7" viewBox="0 0 5 7"><path d="M0.5 0L4.5 3.5L0.5 7z" fill="#000"></path></svg>
<div class="t" style="left:144.50px;width:45.67px;overflow:hidden;top:257.14px;font-size:8.2px;color:#0f3a80;transform:scaleX(0.9);transform-origin:0 50%">210002</div>
<div class="t" style="left:188.60px;width:163.55px;overflow:hidden;top:257.14px;font-size:8.2px;color:#0f3a80;transform:scaleX(0.93);transform-origin:0 50%">''Эрманн''</div>
<div class="t" style="left:867.60px;width:266.13px;overflow:hidden;top:257.14px;font-size:8.2px;color:#0f3a80;transform:scaleX(0.93);transform-origin:0 50%">Торговая деятельность</div>
<div class="t" style="left:1115.9px;width:17.50px;text-align:right;top:257.14px;font-size:8.2px;color:#0f3a80;transform:scaleX(.9);transform-origin:100% 50%">27</div>
<div style="left:142.3px;top:281.31px;width:994.30px;height:1px;background:#d9d9d9"></div>
<div style="left:133.6px;top:269.94px;width:8.70px;height:12.37px;background:#f0f0f0;border-left:1px solid #fff"></div>
<div style="left:133.6px;top:281.31px;width:8.70px;height:1px;background:#404040"></div>
<div class="t" style="left:144.50px;width:45.67px;overflow:hidden;top:269.51px;font-size:8.2px;color:#111;transform:scaleX(0.9);transform-origin:0 50%">210027</div>
<div class="t" style="left:188.60px;width:163.55px;overflow:hidden;top:269.51px;font-size:8.2px;color:#111;transform:scaleX(0.93);transform-origin:0 50%">''Ярмарка''</div>
<div class="t" style="left:867.60px;width:266.13px;overflow:hidden;top:269.51px;font-size:8.2px;color:#111;transform:scaleX(0.93);transform-origin:0 50%">Торговая деятельность</div>
<div class="t" style="left:1115.9px;width:17.50px;text-align:right;top:269.51px;font-size:8.2px;color:#111;transform:scaleX(.9);transform-origin:100% 50%">52</div>
<div style="left:142.3px;top:293.68px;width:994.30px;height:1px;background:#d9d9d9"></div>
<div style="left:133.6px;top:282.31px;width:8.70px;height:12.37px;background:#f0f0f0;border-left:1px solid #fff"></div>
<div style="left:133.6px;top:293.68px;width:8.70px;height:1px;background:#404040"></div>
<div class="t" style="left:144.50px;width:45.67px;overflow:hidden;top:281.88px;font-size:8.2px;color:#111;transform:scaleX(0.9);transform-origin:0 50%">210028</div>
<div class="t" style="left:188.60px;width:163.55px;overflow:hidden;top:281.88px;font-size:8.2px;color:#111;transform:scaleX(0.93);transform-origin:0 50%">Банк Москва</div>
<div class="t" style="left:867.60px;width:266.13px;overflow:hidden;top:281.88px;font-size:8.2px;color:#111;transform:scaleX(0.93);transform-origin:0 50%">Банки</div>
<div class="t" style="left:1115.9px;width:17.50px;text-align:right;top:281.88px;font-size:8.2px;color:#111;transform:scaleX(.9);transform-origin:100% 50%">53</div>
<div style="left:142.3px;top:306.05px;width:994.30px;height:1px;background:#d9d9d9"></div>
<div style="left:133.6px;top:294.68px;width:8.70px;height:12.37px;background:#f0f0f0;border-left:1px solid #fff"></div>
<div style="left:133.6px;top:306.05px;width:8.70px;height:1px;background:#404040"></div>
<div class="t" style="left:144.50px;width:45.67px;overflow:hidden;top:294.25px;font-size:8.2px;color:#111;transform:scaleX(0.9);transform-origin:0 50%">210030</div>
<div class="t" style="left:188.60px;width:163.55px;overflow:hidden;top:294.25px;font-size:8.2px;color:#111;transform:scaleX(0.93);transform-origin:0 50%">ЗАО ''Апрель''</div>
<div class="t" style="left:867.60px;width:266.13px;overflow:hidden;top:294.25px;font-size:8.2px;color:#111;transform:scaleX(0.93);transform-origin:0 50%">Торговая деятельность</div>
<div class="t" style="left:1115.9px;width:17.50px;text-align:right;top:294.25px;font-size:8.2px;color:#111;transform:scaleX(.9);transform-origin:100% 50%">55</div>
<div style="left:142.3px;top:318.42px;width:994.30px;height:1px;background:#d9d9d9"></div>
<div style="left:133.6px;top:307.05px;width:8.70px;height:12.37px;background:#f0f0f0;border-left:1px solid #fff"></div>
<div style="left:133.6px;top:318.42px;width:8.70px;height:1px;background:#404040"></div>
<div class="t" style="left:144.50px;width:45.67px;overflow:hidden;top:306.62px;font-size:8.2px;color:#111;transform:scaleX(0.9);transform-origin:0 50%">210029</div>
<div class="t" style="left:188.60px;width:163.55px;overflow:hidden;top:306.62px;font-size:8.2px;color:#111;transform:scaleX(0.93);transform-origin:0 50%">ЗАО ''Асток-Сервис''</div>
<div class="t" style="left:867.60px;width:266.13px;overflow:hidden;top:306.62px;font-size:8.2px;color:#111;transform:scaleX(0.93);transform-origin:0 50%">Торговая деятельность</div>
<div class="t" style="left:1115.9px;width:17.50px;text-align:right;top:306.62px;font-size:8.2px;color:#111;transform:scaleX(.9);transform-origin:100% 50%">54</div>
<div style="left:142.3px;top:330.79px;width:994.30px;height:1px;background:#d9d9d9"></div>
<div style="left:133.6px;top:319.42px;width:8.70px;height:12.37px;background:#f0f0f0;border-left:1px solid #fff"></div>
<div style="left:133.6px;top:330.79px;width:8.70px;height:1px;background:#404040"></div>
<div class="t" style="left:144.50px;width:45.67px;overflow:hidden;top:318.99px;font-size:8.2px;color:#111;transform:scaleX(0.9);transform-origin:0 50%">210031</div>
<div class="t" style="left:188.60px;width:163.55px;overflow:hidden;top:318.99px;font-size:8.2px;color:#111;transform:scaleX(0.93);transform-origin:0 50%">ЗАО ''Биронмаш''</div>
<div class="t" style="left:867.60px;width:266.13px;overflow:hidden;top:318.99px;font-size:8.2px;color:#111;transform:scaleX(0.93);transform-origin:0 50%">Торговая деятельность</div>
<div class="t" style="left:1115.9px;width:17.50px;text-align:right;top:318.99px;font-size:8.2px;color:#111;transform:scaleX(.9);transform-origin:100% 50%">56</div>
<div style="left:142.3px;top:343.16px;width:994.30px;height:1px;background:#d9d9d9"></div>
<div style="left:133.6px;top:331.79px;width:8.70px;height:12.37px;background:#f0f0f0;border-left:1px solid #fff"></div>
<div style="left:133.6px;top:343.16px;width:8.70px;height:1px;background:#404040"></div>
<div class="t" style="left:144.50px;width:45.67px;overflow:hidden;top:331.36px;font-size:8.2px;color:#111;transform:scaleX(0.9);transform-origin:0 50%">210025</div>
<div class="t" style="left:188.60px;width:163.55px;overflow:hidden;top:331.36px;font-size:8.2px;color:#111;transform:scaleX(0.93);transform-origin:0 50%">Чебоксарская МКФ ''Вавилон''</div>
<div class="t" style="left:867.60px;width:266.13px;overflow:hidden;top:331.36px;font-size:8.2px;color:#111;transform:scaleX(0.93);transform-origin:0 50%">Торговая деятельность</div>
<div class="t" style="left:1115.9px;width:17.50px;text-align:right;top:331.36px;font-size:8.2px;color:#111;transform:scaleX(.9);transform-origin:100% 50%">50</div>
<div style="left:141.90px;top:108.30px;width:1.2px;height:235.86px;background:#505050"></div>
<div style="left:185.90px;top:108.30px;width:1px;height:235.86px;background:#dcdcdc"></div>
<div style="left:341.00px;top:108.30px;width:1px;height:235.86px;background:#dcdcdc"></div>
<div style="left:418.90px;top:108.30px;width:1px;height:235.86px;background:#dcdcdc"></div>
<div style="left:525.10px;top:108.30px;width:1px;height:235.86px;background:#dcdcdc"></div>
<div style="left:670.10px;top:108.30px;width:1px;height:235.86px;background:#dcdcdc"></div>
<div style="left:776.50px;top:108.30px;width:1px;height:235.86px;background:#dcdcdc"></div>
<div style="left:864.90px;top:108.30px;width:1px;height:235.86px;background:#dcdcdc"></div>
<div style="left:1115.40px;top:108.30px;width:1px;height:235.86px;background:#dcdcdc"></div>
<div style="left:1135.10px;top:108.30px;width:1px;height:235.86px;background:#dcdcdc"></div>
<div style="left:1138px;top:69.6px;width:11px;height:580.4px;background:#f0f0f0"></div>
<svg style="left:1139.5px;top:73px" width="8" height="6" viewBox="0 0 8 6"><path d="M1 4.5l3-3 3 3" fill="none" stroke="#606060" stroke-width="1.2"></path></svg>
<svg style="left:1139.5px;top:640.5px" width="8" height="6" viewBox="0 0 8 6"><path d="M1 1.5l3 3 3-3" fill="none" stroke="#606060" stroke-width="1.2"></path></svg>
<div style="left:1138.3px;top:354px;width:10px;height:11px;background:#cdcdcd"></div>
<div style="left:1149px;top:69px;width:3px;height:609px;background:#6e6e6e"></div>
<div style="left:135.3px;top:650px;width:1002.7px;height:10.5px;background:#f0f0f0"></div>
<svg style="left:136.6px;top:651.5px" width="6" height="8" viewBox="0 0 6 8"><path d="M4.5 1l-3 3 3 3" fill="none" stroke="#505050" stroke-width="1.2"></path></svg>
<svg style="left:1130px;top:651.5px" width="6" height="8" viewBox="0 0 6 8"><path d="M1.5 1l3 3-3 3" fill="none" stroke="#505050" stroke-width="1.2"></path></svg>
<div style="left:145.8px;top:650.3px;width:11.8px;height:10px;background:#cdcdcd"></div>
<div style="left:138px;top:662.4px;width:105.5px;height:14.6px;background:#e6e6e6;border:1px solid #cccccc"></div>
<svg style="left:232px;top:666px" width="8" height="6" viewBox="0 0 8 6"><path d="M1 1.5l3 3 3-3" fill="none" stroke="#777" stroke-width="1"></path></svg>
<svg style="left:250.5px;top:661.8px" width="14" height="14" viewBox="0 0 14 14"><circle cx="9.8" cy="10.4" r="3.3" fill="#f5f0b0"></circle><path d="M3.06 .94L10.27 6.73 6.73 10.27 .94 3.06z" transform="scale(.88)" fill="#fff" stroke="#1a1a1a" stroke-width="1.1" stroke-linejoin="round"></path><path d="M8.4 5.2L10.27 6.73 6.73 10.27 5.2 8.4z" transform="scale(.88)" fill="#a82020" stroke="#1a1a1a" stroke-width=".8"></path></svg>
<svg style="left:265px;top:667px" width="6" height="4" viewBox="0 0 6 4"><path d="M0 0h5L2.5 3z" fill="#111"></path></svg>
<div style="left:274px;top:663.6px;width:42.8px;height:11px;background:#fff;border:1px solid #9a9a9a"></div>
<div style="left:320px;top:664px;width:8.7px;height:9px;background:#fff;border:1px solid #6a6a6a"></div>
<div class="t" style="left: 332px; top: 664.6px; font-size: 7.5px; color: rgb(26, 26, 26); letter-spacing: 0.0447266px;">с учетом регистра</div>
<div class="t" style="left: 472.9px; top: 664.8px; font-size: 7.5px; color: rgb(26, 26, 26); letter-spacing: 0.0272917px;">Сортировка: по фирме для поиска</div>
<div style="left:1122.2px;top:665.8px;width:16px;height:10px;background:#e3e3e3;border:1px solid #c0c0c0"></div>
<svg style="left:1122px;top:665px" width="17" height="12" viewBox="0 0 17 12"><circle cx="5.8" cy="7.8" r=".55" fill="#444"></circle><circle cx="8.2" cy="7.8" r=".55" fill="#444"></circle><circle cx="10.6" cy="7.8" r=".55" fill="#444"></circle></svg>
<svg style="left:1141px;top:670px" width="8" height="8" viewBox="0 0 8 8"><g fill="#bdbdbd"><rect x="6" y="1" width="1" height="1"></rect><rect x="4" y="3" width="1" height="1"></rect><rect x="6" y="3" width="1" height="1"></rect><rect x="2" y="5" width="1" height="1"></rect><rect x="4" y="5" width="1" height="1"></rect><rect x="6" y="5" width="1" height="1"></rect></g></svg>
<div style="left:0px;top:691px;width:1152px;height:1px;background:#fff"></div>
<div style="left:0px;top:692px;width:1152px;height:28px;background:#000"></div>
<div style="left:303.60px;top:137.80px;width:544.60px;height:442.70px;background:#f0f0f0;border:1px solid #83b0cc"></div>
<div style="left:304.60px;top:138.80px;width:542.60px;height:16.70px;background:#fff"></div>
<div class="t" style="left: 307px; top: 141.2px; font-size: 8.05px; color: rgb(26, 26, 26); letter-spacing: 0.0477083px;">Юридические лица</div>
<svg style="left:833.5px;top:142.6px" width="8" height="8" viewBox="0 0 8 8"><path d="M.4 .4L7.6 7.6M7.6 .4L.4 7.6" stroke="#222" stroke-width="1"></path></svg>
<div style="left:343.40px;top:162.30px;width:44.30px;height:14.00px;background:#ececec;border:1px solid #e0e0e0;border-bottom:none"></div>
<div class="t" style="left: 347px; top: 163.6px; font-size: 7.6px; color: rgb(26, 26, 26); letter-spacing: 0.1625px;">Переписка</div>
<div style="left:306.00px;top:176.80px;width:535.00px;height:374.00px;background:#f0f0f0;border-top:1px solid #fff;border-left:1px solid #fff;border-right:1px solid #e4e4e4;border-bottom:1px solid #fbfbfb"></div>
<div style="left:307.50px;top:161.80px;width:35.90px;height:16.00px;background:#fff;border:1px solid #e2e2e2;border-bottom:none"></div>
<div class="t" style="left: 310px; top: 162.5px; font-size: 7.6px; color: rgb(26, 26, 26); letter-spacing: 0.115625px;">Главная</div>
<div class="t" style="left: 307.9px; top: 187.6px; font-size: 7.5px; color: rgb(26, 26, 26); letter-spacing: 0.363542px;">Дата</div>
<div class="t" style="left: 307.9px; top: 198.3px; font-size: 7.5px; color: rgb(26, 26, 26); letter-spacing: 0.0450893px;">анкетир.</div>
<div class="t" style="left: 397.8px; top: 187.6px; font-size: 7.5px; color: rgb(26, 26, 26); letter-spacing: 0.0636364px;">Наименование</div>
<div class="t" style="left: 397.8px; top: 198.3px; font-size: 7.5px; color: rgb(26, 26, 26); letter-spacing: 0.149688px;">организации</div>
<div style="left:452.50px;top:188.60px;width:102.30px;height:13.60px;background:#fff;border:1px solid #8a8a8a;border-bottom-color:#e2e2e2;border-right-color:#e2e2e2"></div>
<div class="t" style="left: 454.4px; top: 189.2px; font-size: 7.5px; color: rgb(26, 26, 26); letter-spacing: 0.288194px;">''Эрманн''</div>
<div class="t" style="left: 565.4px; top: 187.5px; font-size: 7.5px; color: rgb(26, 26, 26); letter-spacing: 0.467187px;">Код</div>
<div class="t" style="left:593.60px;top:188.40px;font-size:8.2px;color:#2c2c9c;">27</div>
<div style="left:784.40px;top:188.40px;width:37.40px;height:13.20px;background:#f0f0f0;box-shadow:inset 1px 1px 0 #fff,inset -1px -1px 0 #7a7a7a,inset -2px -2px 0 #b4b4b4"></div>
<div class="t" style="left: 788.7px; top: 189px; font-size: 8.7px; color: rgb(0, 0, 0); transform-origin: 0px 50%; -webkit-text-stroke: 0px; transform: scaleX(0.9205);">Остатки</div>
<div class="t" style="left: 565.4px; top: 204px; font-size: 7.5px; color: rgb(26, 26, 26); letter-spacing: 0.0309028px;">Примечание</div>
<div style="left:564.90px;top:216.50px;width:259.10px;height:72.90px;background:#fff;border:1px solid #8c8c8c;border-right-color:#9a9a9a;border-bottom-color:#9a9a9a"></div>
<div style="left:811.80px;top:217.60px;width:11.00px;height:70.60px;background:#f0f0f0"></div>
<svg style="left:813.3px;top:221px" width="8" height="6" viewBox="0 0 8 6"><path d="M1 4.5l3-3 3 3" fill="none" stroke="#b8b8b8" stroke-width="1"></path></svg>
<svg style="left:813.3px;top:280.3px" width="8" height="6" viewBox="0 0 8 6"><path d="M1 1.5l3 3 3-3" fill="none" stroke="#b8b8b8" stroke-width="1"></path></svg>
<div class="t" style="left: 567.2px; top: 217.6px; font-size: 7.5px; color: rgb(26, 26, 26); letter-spacing: -0.0288826px;">Отправлять информацию на две почты</div>
<div class="t" style="left: 567.2px; top: 226.4px; font-size: 7.5px; color: rgb(26, 26, 26); letter-spacing: -0.0167411px;">kon.v@ermann.ru</div>
<div class="t" style="left: 567.2px; top: 235.1px; font-size: 7.5px; color: rgb(26, 26, 26); letter-spacing: -0.145052px;">dir@ermann.ru</div>
<div class="t" style="left: 307.9px; top: 215px; font-size: 7.5px; color: rgb(26, 26, 26); letter-spacing: 0.015625px;">Менеджер</div>
<div style="left:356.30px;top:213.00px;width:41.30px;height:13.40px;background:#fff;border:1px solid #8a8a8a;border-bottom-color:#e2e2e2;border-right-color:#e2e2e2"></div>
<div class="t" style="left:359.00px;top:213.70px;font-size:7.8px;color:#1a1a1a;">1</div>
<div style="left:387.80px;top:214.20px;width:8.80px;height:11.20px;background:#f0f0f0;box-shadow:inset -1px -1px 0 #a0a0a0"></div>
<div style="left:389.20px;top:220.00px;width:1.20px;height:1.20px;background:#000"></div>
<div style="left:391.60px;top:220.00px;width:1.20px;height:1.20px;background:#000"></div>
<div style="left:394.00px;top:220.00px;width:1.20px;height:1.20px;background:#000"></div>
<div class="t" style="left: 401.5px; top: 212.3px; font-size: 7.8px; color: rgb(52, 52, 168); letter-spacing: -0.0140625px;">Ежова</div>
<div class="t" style="left: 307.9px; top: 231.1px; font-size: 7.5px; color: rgb(26, 26, 26); letter-spacing: 0.0442308px;">Группа клиента</div>
<div style="left:374.10px;top:229.60px;width:34.40px;height:13.00px;background:#fff;border:1px solid #8a8a8a;border-bottom-color:#e2e2e2;border-right-color:#e2e2e2"></div>
<div class="t" style="left:394.20px;top:230.30px;font-size:7.8px;color:#1a1a1a;">1</div>
<div style="left:399.60px;top:230.80px;width:8.00px;height:10.80px;background:#f0f0f0;box-shadow:inset -1px -1px 0 #a0a0a0"></div>
<div style="left:400.60px;top:236.40px;width:1.20px;height:1.20px;background:#000"></div>
<div style="left:403.00px;top:236.40px;width:1.20px;height:1.20px;background:#000"></div>
<div style="left:405.40px;top:236.40px;width:1.20px;height:1.20px;background:#000"></div>
<div class="t" style="left: 412px; top: 228.7px; font-size: 7.8px; color: rgb(52, 52, 168); letter-spacing: -0.155px;">Теплые</div>
<div class="t" style="left: 307.9px; top: 253.7px; font-size: 7.5px; color: rgb(26, 26, 26); letter-spacing: 0.0573529px;">Контактный телефон</div>
<div style="left:400.50px;top:254.50px;width:143.30px;height:13.10px;background:#fff;border:1px solid #8a8a8a;border-bottom-color:#e2e2e2;border-right-color:#e2e2e2"></div>
<div class="t" style="left: 402.7px; top: 255.3px; font-size: 7.6px; color: rgb(26, 26, 26); letter-spacing: -0.109659px;">+79863864927</div>
<div style="left:533.20px;top:255.60px;width:9.60px;height:11.00px;background:#f0f0f0;box-shadow:inset -1px -1px 0 #a0a0a0"></div>
<div style="left:535.00px;top:261.30px;width:1.20px;height:1.20px;background:#000"></div>
<div style="left:537.40px;top:261.30px;width:1.20px;height:1.20px;background:#000"></div>
<div style="left:539.80px;top:261.30px;width:1.20px;height:1.20px;background:#000"></div>
<div class="t" style="left: 308px; top: 275.1px; font-size: 7.5px; color: rgb(26, 26, 26); letter-spacing: -0.015767px;">Контактный адрес E-MAIL</div>
<div style="left:400.50px;top:276.60px;width:143.30px;height:12.90px;background:#fff;border:1px solid #8a8a8a;border-bottom-color:#e2e2e2;border-right-color:#e2e2e2"></div>
<div class="t" style="left: 402.7px; top: 277.4px; font-size: 7.6px; color: rgb(26, 26, 26); letter-spacing: -0.0763393px;">kon.v@ermann.ru</div>
<div style="left:533.20px;top:277.70px;width:9.60px;height:10.80px;background:#f0f0f0;box-shadow:inset -1px -1px 0 #a0a0a0"></div>
<div style="left:535.00px;top:283.30px;width:1.20px;height:1.20px;background:#000"></div>
<div style="left:537.40px;top:283.30px;width:1.20px;height:1.20px;background:#000"></div>
<div style="left:539.80px;top:283.30px;width:1.20px;height:1.20px;background:#000"></div>
<div style="left:307.80px;top:324.60px;width:528.60px;height:206.00px;background:#f0f0f0;border-top:1px solid #fff;border-left:1px solid #f6f6f6;border-right:1px solid #dcdcdc;border-bottom:1px solid #fdfdfd"></div>
<div style="left:307.80px;top:310.60px;width:39.90px;height:13.80px;background:#ececec;border:1px solid #e0e0e0;border-bottom:none"></div>
<div class="t" style="left: 310.2px; top: 311.7px; font-size: 7.6px; color: rgb(26, 26, 26); letter-spacing: 0.198214px;">Контакты</div>
<div style="left:347.70px;top:310.60px;width:48.55px;height:13.80px;background:#ececec;border:1px solid #e0e0e0;border-bottom:none"></div>
<div class="t" style="left: 352.3px; top: 311.7px; font-size: 7.6px; color: rgb(26, 26, 26); letter-spacing: 0.180469px;">Документы</div>
<div style="left:396.25px;top:310.60px;width:37.45px;height:13.80px;background:#ececec;border:1px solid #e0e0e0;border-bottom:none"></div>
<div class="t" style="left: 400.8px; top: 311.7px; font-size: 7.6px; color: rgb(26, 26, 26); letter-spacing: 0.0140625px;">Интерес</div>
<div style="left:433.70px;top:310.60px;width:46.80px;height:13.80px;background:#ececec;border:1px solid #e0e0e0;border-bottom:none"></div>
<div class="t" style="left: 438.75px; top: 311.7px; font-size: 7.6px; color: rgb(26, 26, 26); letter-spacing: 0.160156px;">Реквизиты</div>
<div style="left:480.50px;top:310.60px;width:66.40px;height:13.80px;background:#ececec;border:1px solid #e0e0e0;border-bottom:none"></div>
<div class="t" style="left: 484.8px; top: 311.7px; font-size: 7.6px; color: rgb(26, 26, 26); letter-spacing: 0.0625px;">Резервирование</div>
<div style="left:546.90px;top:309.40px;width:54.35px;height:16.20px;background:#fff;border:1px solid #e0e0e0;border-bottom:none"></div>
<div class="t" style="left: 551.6px; top: 310.1px; font-size: 7.6px; color: rgb(26, 26, 26); letter-spacing: -0.0555556px;">Информация</div>
<div style="left:601.25px;top:310.60px;width:38.50px;height:13.80px;background:#ececec;border:1px solid #e0e0e0;border-bottom:none"></div>
<div class="t" style="left: 604.7px; top: 311.7px; font-size: 7.6px; color: rgb(26, 26, 26); letter-spacing: 0.188542px;">Реклама</div>
<div style="left:639.75px;top:310.60px;width:79.25px;height:13.80px;background:#ececec;border:1px solid #e0e0e0;border-bottom:none"></div>
<div class="t" style="left: 644.75px; top: 311.7px; font-size: 7.6px; color: rgb(26, 26, 26); letter-spacing: -0.0240809px;">Задачи органайзера</div>
<div style="left:719.00px;top:310.60px;width:59.60px;height:13.80px;background:#ececec;border:1px solid #e0e0e0;border-bottom:none"></div>
<div class="t" style="left: 723.5px; top: 311.7px; font-size: 7.6px; color: rgb(26, 26, 26); letter-spacing: -0.0939904px;">Бухгалтер.инф.</div>
<div style="left:822.50px;top:491.00px;width:2.00px;height:19.00px;background:#f6f6f6;border-left:1px solid #e6e6e6"></div>
<div style="left:306.60px;top:556.50px;width:51.00px;height:16.00px;background:#f0f0f0;border:1px solid #5a5a5a;box-shadow:inset 1px 1px 0 #fff,inset -1px -1px 0 #a0a0a0"></div>
<div style="left:309.10px;top:559.00px;width:46.00px;height:11.00px;border:1px solid #c4c4c4"></div>
<div class="t" style="left: 326.73px; top: 558.5px; font-size: 8.7px; color: rgb(0, 0, 0); transform-origin: 0px 50%; -webkit-text-stroke: 0px; transform: scaleX(0.9274);">OK</div>
<div style="left:361.25px;top:556.50px;width:51.25px;height:16.00px;background:#f0f0f0;box-shadow:inset 1px 1px 0 #fff,inset -1px -1px 0 #7a7a7a,inset -2px -2px 0 #b4b4b4"></div>
<div class="t" style="left: 368.38px; top: 558.5px; font-size: 8.7px; color: rgb(166, 166, 166); transform-origin: 0px 50%; -webkit-text-stroke: 0px; transform: scaleX(0.8779);">Сохранить</div>
<div style="left:416.25px;top:556.50px;width:51.25px;height:16.00px;background:#f0f0f0;box-shadow:inset 1px 1px 0 #fff,inset -1px -1px 0 #7a7a7a,inset -2px -2px 0 #b4b4b4"></div>
<div class="t" style="left: 428.38px; top: 558.5px; font-size: 8.7px; color: rgb(0, 0, 0); transform-origin: 0px 50%; -webkit-text-stroke: 0px; transform: scaleX(0.895);">Отмена</div>
<div style="left:787.25px;top:555.00px;width:15.50px;height:16.50px;background:#f0f0f0;box-shadow:inset 1px 1px 0 #fff,inset -1px -1px 0 #7a7a7a,inset -2px -2px 0 #b4b4b4"></div>
<div style="left:806.00px;top:555.00px;width:15.50px;height:16.50px;background:#f0f0f0;box-shadow:inset 1px 1px 0 #fff,inset -1px -1px 0 #7a7a7a,inset -2px -2px 0 #b4b4b4"></div>
<svg style="left:792.5px;top:560px" width="5" height="7" viewBox="0 0 5 7"><path d="M3.8 .8L1.2 3.5l2.6 2.7" fill="none" stroke="#333" stroke-width=".9"></path></svg>
<svg style="left:811.5px;top:560px" width="5" height="7" viewBox="0 0 5 7"><path d="M1.2 .8l2.6 2.7-2.6 2.7" fill="none" stroke="#333" stroke-width=".9"></path></svg>

</body></html>
